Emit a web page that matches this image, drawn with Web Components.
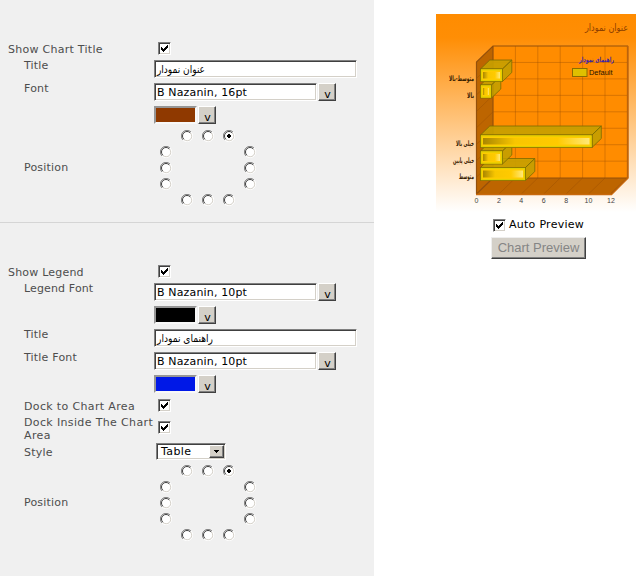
<!DOCTYPE html>
<html lang="en">
<head>
<meta charset="utf-8">
<title>Chart settings</title>
<style>
html,body{margin:0;height:100%;background:#fff}
body{font:11px/13px "DejaVu Sans",Verdana,sans-serif;color:#4d4d4d;overflow:hidden}
</style>
</head>
<body>
<chart-designer></chart-designer>
<script>
const define = (name, html, setup) => customElements.define(name, class extends HTMLElement {
  connectedCallback() {
    if (this.shadowRoot) return;
    const t = document.createElement('template');
    t.innerHTML = typeof html === 'function' ? html(this) : html;
    this.attachShadow({mode: 'open'}).append(t.content.cloneNode(true));
    if (setup) setup(this);
  }
});

const sunken = 'border:1px solid;border-color:#808080 #fff #fff #808080;box-shadow:inset 1px 1px #404040,inset -1px -1px #d4d0c8;';

define('check-box', `<style>
:host{display:block;width:13px;height:13px;box-sizing:border-box;${sunken}background:#fff;flex:none}
svg{display:block}
</style><svg width="11" height="11" shape-rendering="crispEdges"><path d="M2 4h1v1h1v1h1v-1h1v-1h1v-1h1v-1h1v3h-1v1h-1v1h-1v1h-1v1h-1v-1h-1v-1h-1z" fill="#000"/></svg>`);

define('radio-dot', el => `<style>
:host{display:block;width:12px;height:12px}svg{display:block}
</style><svg width="12" height="12" viewBox="0 0 12 12"><circle cx="6" cy="6" r="5" fill="#fff"/>
<path d="M10 2A5.5 5.5 0 0 1 2 10" fill="none" stroke="#fff"/><path d="M9.4 3A4.500 4.500 0 0 1 3 9.400" fill="none" stroke="#d4d0c8"/>
<path d="M2 10A5.5 5.5 0 0 1 10 2" fill="none" stroke="#808080"/><path d="M2.8 9.2A4.5 4.5 0 0 1 9.2 2.8" fill="none" stroke="#404040"/>
${el.hasAttribute('checked') ? '<path d="M5 4h2v1h1v2h-1v1h-2v-1h-1v-2h1z" fill="#000" shape-rendering="crispEdges"/>' : ''}</svg>`);

define('text-field', `<style>
:host{display:flex;align-items:center;width:203px;height:18px;box-sizing:border-box;${sunken}background:#fff;color:#000;padding:1px 0 0 2px;white-space:nowrap;overflow:hidden;flex:none;letter-spacing:.15px}
:host([short]){width:163px}
</style><slot></slot>`);

define('arabic-text', el => `<style>:host{display:block;letter-spacing:0}svg{display:block;overflow:visible}</style>
<svg width="${el.getAttribute('w')}" height="14"><text x="${el.getAttribute('w')}" y="10" direction="rtl" textLength="${el.getAttribute('w')}" lengthAdjust="spacingAndGlyphs" font-family="DejaVu Sans, sans-serif" font-size="10.5">${el.getAttribute('text')}</text></svg>`);

define('drop-button', `<style>
:host{display:block;width:18px;height:18px;box-sizing:border-box;background:#d4d0c8;border:1px solid;border-color:#fff #404040 #404040 #fff;box-shadow:inset -1px -1px #808080;color:#000;text-align:center;padding:4px 0 0 1px;line-height:13px;margin-left:1px;flex:none}
</style>v`);

define('color-swatch', el => `<style>
:host{display:block;width:43px;height:18px;box-sizing:border-box;border:2px solid;border-color:#969696 #f8f8f8 #f8f8f8 #969696;background:${el.getAttribute('color')};flex:none}
</style>`);

define('select-box', `<style>
:host{display:flex;width:70px;height:17px;box-sizing:border-box;${sunken}background:#fff;color:#000;align-items:center;padding-left:4px;justify-content:space-between;letter-spacing:.4px}
b{width:15px;height:13px;box-sizing:border-box;margin-right:1px;background:#d4d0c8;border:1px solid;border-color:#fff #404040 #404040 #fff;box-shadow:inset -1px -1px #808080;display:grid;place-items:center}
</style><slot></slot><b><svg width="5" height="3" shape-rendering="crispEdges"><path d="M0 0h5v1h-1v1h-1v1h-1v-1h-1v-1h-1z"/></svg></b>`);

define('position-picker', () => {
  const spots = [[1,2],[1,3],[1,4,1],[2,1],[2,5],[3,1],[3,5],[4,1],[4,5],[5,2],[5,3],[5,4]];
  return `<style>
:host{display:grid;grid-template:repeat(5,16px)/repeat(5,21px);width:105px;height:80px;place-items:center;margin-left:1px}
</style>` + spots.map(([r, c, on]) => `<radio-dot style="grid-area:${r}/${c}"${on ? ' checked' : ''}></radio-dot>`).join('');
});

define('form-row', el => `<style>
:host{display:grid;grid-template-columns:154px 1fr;height:${el.getAttribute('h') || 23}px}
.label{padding-left:24px;margin-top:${el.getAttribute('dy') || -1}px;white-space:pre;letter-spacing:${el.getAttribute('ls') || .2}px}
:host([head]) .label{padding-left:8px}
.control{display:flex;align-items:flex-start;padding-left:${el.getAttribute('indent') || 0}px}
</style><div class="label"><slot name="label"></slot></div><div class="control"><slot></slot></div>`);

define('form-section', `<style>
:host{display:block;padding-top:42px}
:host([divided]){height:180px;border-bottom:1px solid #d5d5d5}
</style><slot></slot>`);

define('chart-preview', () => {
  const bar = (x, y, w, h) => `<g stroke="#7a6a00" stroke-width=".8">
<path d="M${x} ${y}l9.3-9h${w}l-9.3 9z" fill="#c8a000" fill-opacity=".92"/>
<path d="M${x+w} ${y}l9.3-9v${h}l-9.3 9z" fill="#c0a000" fill-opacity=".85"/>
<rect x="${x}" y="${y}" width="${w}" height="${h}" fill="#ffcb00"/>
<rect x="${x+1}" y="${y+1}" width="${w-2}" height="${h-2}" fill="none" stroke="#e2d000" stroke-width="1.2"/>
<rect x="${x+2.5}" y="${y+3}" width="${w-5}" height="${h-6}" fill="url(#shine)" stroke="none"/></g>`;
  let grid = '';
  for (let i = 1; i < 6; i++) { const x = 57 + i * 22.4; grid += `M${x} 32V164l-16.5 16`; }
  for (let i = 1; i < 8; i++) { const y = 32 + i * 16.45; grid += `M191 ${y}H57l-16.5 16`; }
  const label = (t, y, w) => `<text x="38" y="${y}" direction="rtl" text-anchor="start" textLength="${w}" lengthAdjust="spacingAndGlyphs" font-size="7.500" font-weight="bold" fill="#382000">${t}</text>`;
  return `<style>:host{display:block;width:200px;height:200px}svg{display:block;overflow:visible}</style>
<svg width="200" height="200" font-family="DejaVu Sans, sans-serif">
<defs><linearGradient id="sky" x2="0" y2="1"><stop stop-color="#ff8c00"/><stop offset=".12" stop-color="#ff8e05"/><stop offset="1" stop-color="#fff"/></linearGradient>
<linearGradient id="shine"><stop stop-color="#a98600"/><stop offset=".3" stop-color="#f8c600"/><stop offset=".7" stop-color="#ffca00"/><stop offset="1" stop-color="#ffe878"/></linearGradient></defs>
<rect width="200" height="198" fill="url(#sky)"/>
<path d="M57 32H191.500V164H57z" fill="#ff8c00"/>
<path d="M40.500 48L57 32V164H191.500L175 180H40.500z" fill="#bd6500"/>
<path d="${grid}" fill="none" stroke="#914a00" stroke-opacity=".45" stroke-width=".8"/>
<path d="M40.500 180V48L57 32H191.500V164L175 180M57 32V164M57 164H191.500M57 164L40.500 180" fill="none" stroke="#94500b" stroke-width="1.2"/>
<path d="M40 180.500H175.500L192 164V32" fill="none" stroke="#c8690c" stroke-width="1.5"/>
${bar(44.5, 153.5, 45, 13)}${bar(44.5, 137, 22, 13)}${bar(44.5, 121, 111.500, 12.500)}${bar(44.5, 71, 11, 13)}${bar(44.5, 55, 22, 12.500)}
<text transform="translate(192 17) scale(.81 1)" direction="rtl" font-size="10" fill="#8d3f00">عنوان نمودار</text>
<text x="178" y="47.500" direction="rtl" textLength="35" lengthAdjust="spacingAndGlyphs" font-size="7" font-weight="bold" fill="#3b23a8">راهنمای نمودار</text>
<rect x="136.500" y="54.500" width="14.500" height="8" fill="#dfc000" stroke="#8c6c00"/>
<text x="153" y="60.500" textLength="23.500" lengthAdjust="spacingAndGlyphs" font-family="Liberation Sans, sans-serif" font-size="8" fill="#241400">Default</text>
${label('متوسط-بالا', 67, 25)}${label('بالا', 84, 7)}${label('خیلی بالا', 132, 18)}${label('خیلی پایین', 149, 21)}${label('متوسط', 165, 15)}
<g font-family="Liberation Sans, sans-serif" font-size="7" text-anchor="middle" fill="#444">${[0,2,4,6,8,10,12].map((n, i) => `<text x="${40.5 + i * 22.4}" y="189">${n}</text>`).join('')}</g>
</svg>`;
});

define('push-button', `<style>
:host{display:grid;place-items:center;width:95px;height:22px;box-sizing:border-box;background:#d4d0c8;border:1px solid;border-color:#eee #404040 #404040 #eee;box-shadow:inset -1px -1px #808080;font:13px/16px "Liberation Sans",Arial,sans-serif;color:#858585;white-space:nowrap}
</style><slot></slot>`);

define('chart-designer', `<style>
:host{display:grid;grid-template-columns:374px 1fr;height:576px}
.settings{background:#f0f0f0}
.preview{padding:14px 0 0 62px}
.auto{display:flex;gap:3px;margin:4px 0 0 57px;color:#000;white-space:nowrap;letter-spacing:.27px}
.auto check-box{margin-top:1px}
push-button{margin:5px 0 0 55px}
</style>
<div class="settings">
<form-section divided>
<form-row head h="18" indent="4" dy="1" ls=".27"><span slot="label">Show Chart Title</span><check-box></check-box></form-row>
<form-row><span slot="label">Title</span><text-field><arabic-text w="48" text="عنوان نمودار"></arabic-text></text-field></form-row>
<form-row><span slot="label">Font</span><text-field short>B Nazanin, 16pt</text-field><drop-button></drop-button></form-row>
<form-row h="22"><color-swatch color="#8f3900"></color-swatch><drop-button></drop-button></form-row>
<form-row h="80" dy="33"><span slot="label">Position</span><position-picker></position-picker></form-row>
</form-section>
<form-section>
<form-row head h="18" indent="4" dy="1"><span slot="label">Show Legend</span><check-box></check-box></form-row>
<form-row ls=".13"><span slot="label">Legend Font</span><text-field short>B Nazanin, 10pt</text-field><drop-button></drop-button></form-row>
<form-row><color-swatch color="#000"></color-swatch><drop-button></drop-button></form-row>
<form-row><span slot="label">Title</span><text-field><arabic-text w="56" text="راهنمای نمودار"></arabic-text></text-field></form-row>
<form-row><span slot="label">Title Font</span><text-field short>B Nazanin, 10pt</text-field><drop-button></drop-button></form-row>
<form-row h="24"><color-swatch color="#0018e7"></color-swatch><drop-button></drop-button></form-row>
<form-row h="22" indent="4" dy="1" ls=".35"><span slot="label">Dock to Chart Area</span><check-box></check-box></form-row>
<form-row h="22" indent="4" dy="-5" ls=".36"><span slot="label">Dock Inside The Chart
Area</span><check-box></check-box></form-row>
<form-row h="20" indent="2" dy="3"><span slot="label">Style</span><select-box>Table</select-box></form-row>
<form-row h="80" dy="33"><span slot="label">Position</span><position-picker></position-picker></form-row>
</form-section>
</div>
<div class="preview">
<chart-preview></chart-preview>
<div class="auto"><check-box></check-box>Auto Preview</div>
<push-button>Chart Preview</push-button>
</div>`);
</script>
</body>
</html>
